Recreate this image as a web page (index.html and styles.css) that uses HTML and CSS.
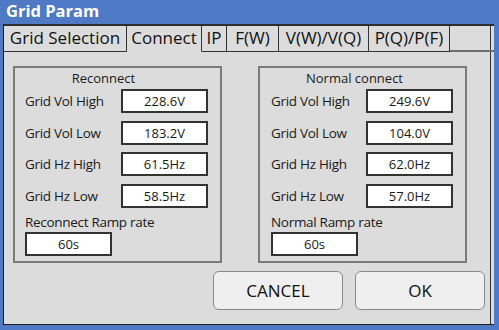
FILE: index.html
```html
<!DOCTYPE html>
<html>
<head>
<meta charset="utf-8">
<link rel="stylesheet" href="styles.css">
</head>
<body>
<div class="window">
  <div class="titlebar">Grid Param</div>
  <div class="panel">
    <div class="tabs">
      <div class="tab tab-grid">Grid Selection</div>
      <div class="tab tab-connect active">Connect</div>
      <div class="tab tab-ip">IP</div>
      <div class="tab tab-fw">F(W)</div>
      <div class="tab tab-vw">V(W)/V(Q)</div>
      <div class="tab tab-pq">P(Q)/P(F)</div>
      <div class="tab-fill"></div>
    </div>
    <div class="content">
      <div class="groups">
        <div class="group group-left">
          <div class="group-title">Reconnect</div>
          <div class="rows">
            <div class="row"><span class="label">Grid Vol High</span><span class="value">228.6V</span></div>
            <div class="row"><span class="label">Grid Vol Low</span><span class="value">183.2V</span></div>
            <div class="row"><span class="label">Grid Hz High</span><span class="value">61.5Hz</span></div>
            <div class="row"><span class="label">Grid Hz Low</span><span class="value">58.5Hz</span></div>
          </div>
          <div class="ramp-label">Reconnect Ramp rate</div>
          <div class="value ramp">60s</div>
        </div>
        <div class="group group-right">
          <div class="group-title">Normal connect</div>
          <div class="rows">
            <div class="row"><span class="label">Grid Vol High</span><span class="value">249.6V</span></div>
            <div class="row"><span class="label">Grid Vol Low</span><span class="value">104.0V</span></div>
            <div class="row"><span class="label">Grid Hz High</span><span class="value">62.0Hz</span></div>
            <div class="row"><span class="label">Grid Hz Low</span><span class="value">57.0Hz</span></div>
          </div>
          <div class="ramp-label">Normal Ramp rate</div>
          <div class="value ramp">60s</div>
        </div>
      </div>
      <div class="buttons">
        <button class="btn">CANCEL</button>
        <button class="btn">OK</button>
      </div>
    </div>
  </div>
</div>
</body>
</html>
```
FILE: styles.css
```css
html, body {
  margin: 0;
  padding: 0;
  background: #4f79c4;
}
body {
  font-family: "Open Sans", "Noto Sans", sans-serif;
  color: #1a1a1a;
}
.window {
  width: 499px;
  height: 330px;
  background: #4f79c4;
  display: flex;
  flex-direction: column;
  overflow: hidden;
}
.titlebar {
  height: 24px;
  box-sizing: border-box;
  padding-left: 6px;
  color: #ffffff;
  font-weight: 700;
  font-size: 16.5px;
  line-height: 22px;
}
.panel {
  flex: 1;
  margin: 0 5px 5px 3px;
  background: #dcdcdc;
  border-left: 1px solid #1e1e1e;
  border-bottom: 1px solid #1e1e1e;
  box-shadow: inset -3px 0 0 #dcdcdc, inset -4px 0 0 #333333;
  display: flex;
  flex-direction: column;
}
.tabs {
  display: flex;
  height: 28px;
}
.tab {
  box-sizing: border-box;
  flex: none;
  height: 28px;
  padding: 0;
  border-top: 2px solid #2e2e2e;
  border-right: 1px solid #333333;
  border-bottom: 1px solid #333333;
  font-size: 17px;
  line-height: 24px;
  text-align: center;
  color: #111111;
  white-space: nowrap;
}
.tab-grid { width: 123px; }
.tab-connect { width: 75px; }
.tab-ip { width: 25px; }
.tab-fw { width: 52px; }
.tab-vw { width: 90px; }
.tab-pq { width: 81px; }
.tab.active {
  border-bottom-color: #dcdcdc;
}
.tab-fill {
  flex: 1;
  box-sizing: border-box;
  height: 28px;
  border-top: 2px solid #2e2e2e;
  border-bottom: 2px solid #6e6e6e;
}
.content {
  padding: 14px 9px 0 9px;
}
.groups {
  display: flex;
  gap: 36px;
}
.group {
  box-sizing: border-box;
  width: 209px;
  height: 197px;
  border: 2px solid #7a7a7a;
  padding: 0 12px 0 10px;
}
.group-right {
  padding-left: 11px;
}
.group-title {
  margin-top: 1px;
  font-size: 13px;
  line-height: 18px;
  text-align: center;
}
.group-left .group-title {
  padding-right: 26px;
}
.group-right .group-title {
  padding-right: 15px;
}
.rows {
  margin-top: 2px;
  display: flex;
  flex-direction: column;
  gap: 7.67px;
}
.row {
  display: flex;
  justify-content: space-between;
  align-items: center;
  height: 24px;
}
.label, .ramp-label {
  font-size: 13.5px;
  letter-spacing: -0.3px;
  line-height: 18px;
}
.value {
  box-sizing: border-box;
  width: 87px;
  height: 24px;
  border: 2px solid #333333;
  background: #ffffff;
  text-align: center;
  font-size: 13px;
  line-height: 20px;
}
.ramp-label {
  margin-top: 5px;
}
.value.ramp {
  margin-top: 1px;
}
.buttons {
  margin-top: 8px;
  display: flex;
  justify-content: flex-end;
  gap: 12px;
}
.btn {
  box-sizing: border-box;
  width: 130px;
  height: 39px;
  border: 1px solid #8a8a8a;
  border-radius: 6px;
  background: #efefef;
  font-family: "Open Sans", "Noto Sans", sans-serif;
  font-size: 17px;
  color: #111111;
  padding: 0;
}
```
